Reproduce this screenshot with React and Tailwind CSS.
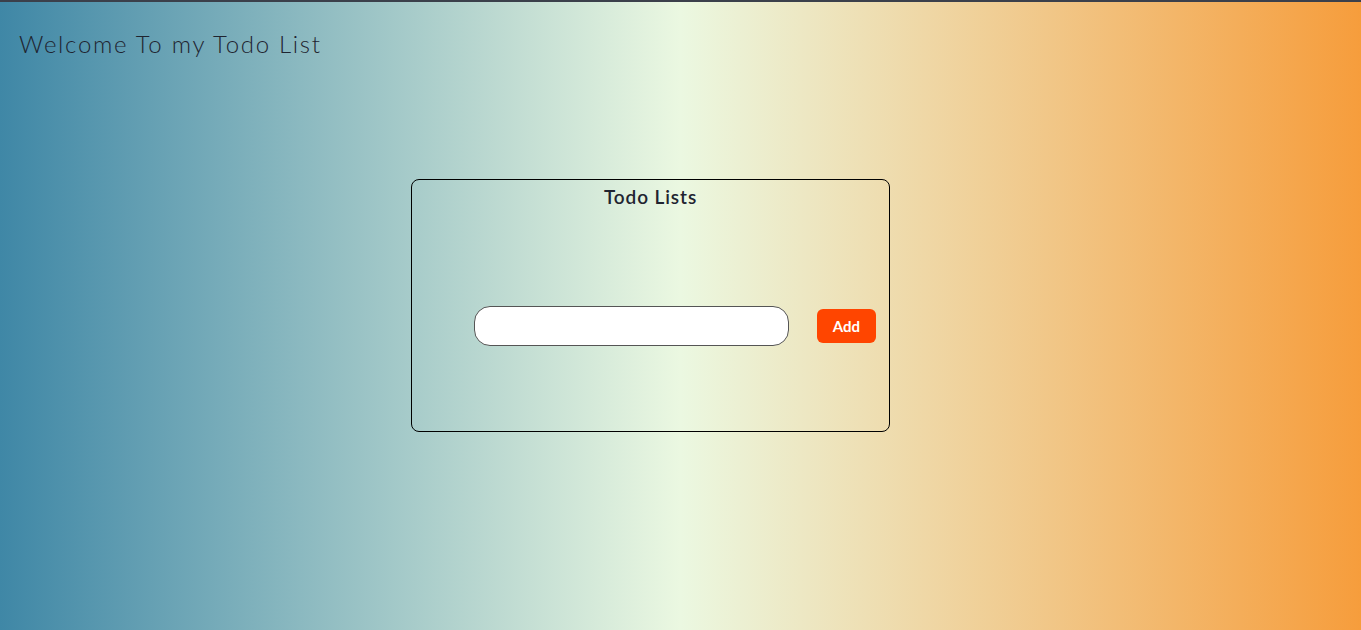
import React, { useState } from "react";

const App = () => {
  const [todo, setTodo] = useState("");

  return (
    <div className="min-h-screen w-full border-t-2 border-[#3b404b] bg-[linear-gradient(to_right,#3f87a6,#ebf8e1,#f69d3c)] font-['Lato','Open_Sans',sans-serif] text-[#1f2430]">
      {/* HEADER */}
      <div className="px-[19px] pt-[28px]">
        <h1 className="text-[24px] leading-[28px] tracking-[1.7px] font-light">
          Welcome To my Todo List
        </h1>
      </div>

      {/* CARD */}
      <div className="ml-[411px] mt-[121px] w-[479px] h-[253px] border border-black rounded-[8px] flex flex-col">
        <h2 className="text-center text-[19px] leading-[22px] font-semibold tracking-[0.9px] pt-[6px]">
          Todo Lists
        </h2>
        <div className="flex items-center mt-[98px] pl-[62px] pr-[13px]">
          <input
            type="text"
            value={todo}
            onChange={(e) => setTodo(e.target.value)}
            className="w-[315px] h-[40px] bg-white border border-[#555] rounded-[16px] px-4 outline-none"
          />
          <button className="ml-auto w-[59px] h-[34px] bg-[#ff4500] text-white text-[15px] font-bold rounded-[6px]">
            Add
          </button>
        </div>
      </div>
    </div>
  );
};

export default App;
